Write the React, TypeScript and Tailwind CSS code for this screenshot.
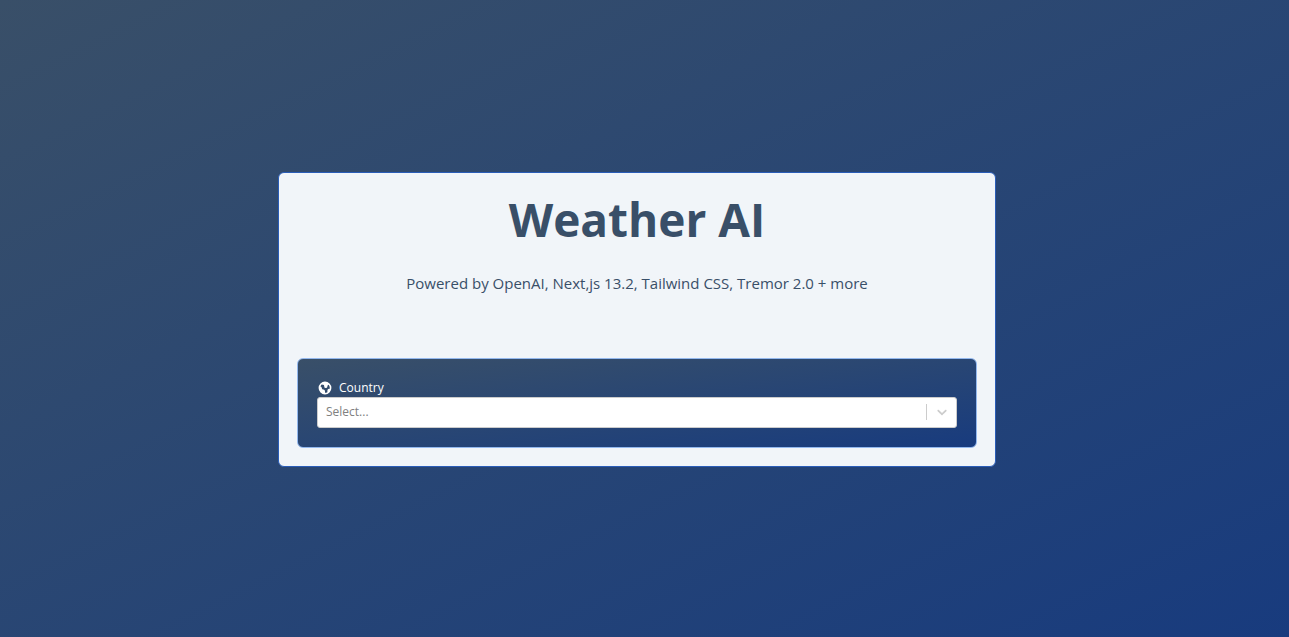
import { HiGlobe } from "react-icons/hi";

function CountryPicker() {
  return (
    <div className="rounded-md border border-[#93b8ee] bg-linear-to-br from-[#394F68] to-[#183B7E] px-[19px] pt-5 pb-[19px]">
      <div className="flex items-center gap-1.5 text-white">
        <HiGlobe className="size-4" aria-hidden="true" />
        <label htmlFor="country" className="text-xs leading-[18px]">
          Country
        </label>
      </div>
      <div className="relative">
        <select
          id="country"
          defaultValue=""
          className="block h-[31px] w-full appearance-none rounded-[3px] border border-[#ccc] bg-white px-2 text-xs text-[#808080]"
        >
          <option value="">Select...</option>
        </select>
        <div className="pointer-events-none absolute inset-y-0 right-0 flex items-center gap-[7px] pr-[7px] text-[#ccc]">
          <span className="h-4 w-px bg-[#ccc]" />
          <svg className="size-4 fill-current" viewBox="0 0 20 20" aria-hidden="true">
            <path d="M4.516 7.548c0.436-0.446 1.043-0.481 1.576 0l3.908 3.747 3.908-3.747c0.533-0.481 1.141-0.446 1.574 0 0.436 0.445 0.408 1.197 0 1.615-0.406 0.418-4.695 4.502-4.695 4.502-0.217 0.223-0.502 0.335-0.787 0.335s-0.57-0.112-0.789-0.335c0 0-4.287-4.084-4.695-4.502s-0.436-1.17 0-1.615z" />
          </svg>
        </div>
      </div>
    </div>
  );
}

export default function App() {
  return (
    <div className="flex min-h-screen flex-col items-center justify-center bg-linear-to-br from-[#394F68] to-[#183B7E] pt-px pr-[15px] font-['Open_Sans','Noto_Sans',sans-serif]">
      <main className="w-full max-w-[718px] rounded-md border border-[#2a5db8] bg-slate-100 px-[18px] pt-4 pb-[18px]">
        <h1 className="text-center text-[46px] leading-[60px] font-bold text-[#394F68]">Weather AI</h1>
        <p className="mt-6 mb-[65px] text-center text-[15px] leading-5 text-[#394F68]">
          Powered by OpenAI, Next,js 13.2, Tailwind CSS, Tremor 2.0 + more
        </p>
        <CountryPicker />
      </main>
    </div>
  );
}
